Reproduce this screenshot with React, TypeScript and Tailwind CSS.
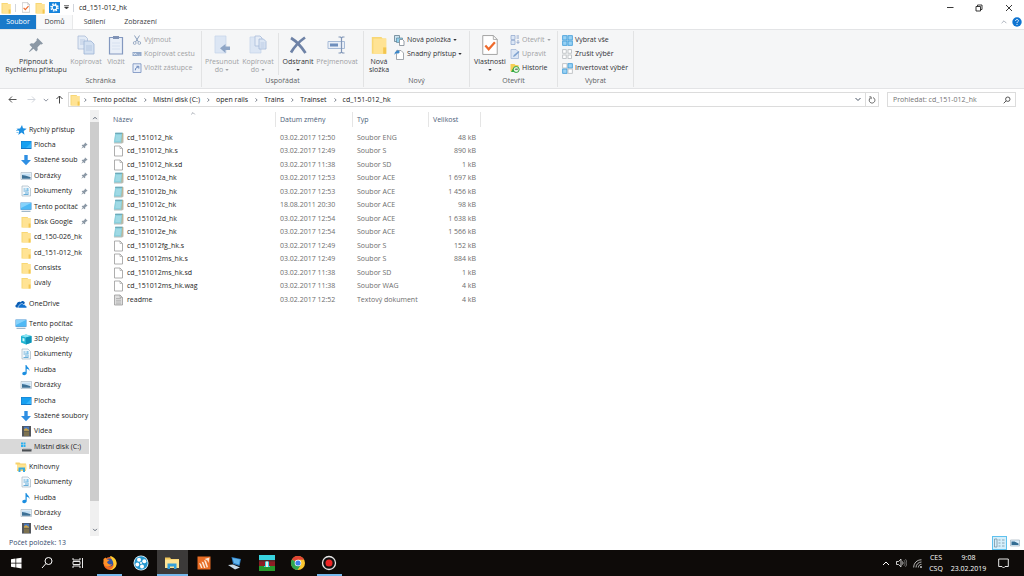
import type { ReactNode } from "react";
import clsx from "clsx";

type IconProps = { className?: string };

/* ---------- shared icons ---------- */

const Folder = ({ className = "w-2.5 h-3" }: IconProps) => (
  <svg viewBox="0 0 10 12" className={className}>
    <path d="M.5 1h6l.8 1H9.5v9.5h-9z" fill="#f8d775" />
    <path d="M1.5 2h8v9.5h-8z" fill="#ffe394" />
    <path d="M7.6 7.5h1.9v4H7.6z" fill="#f3c64f" />
  </svg>
);

const CheckDoc = ({ className = "w-2.5 h-3" }: IconProps) => (
  <svg viewBox="0 0 14 18" className={className}>
    <path d="M.5.5h9.500l3.500 3.500v13.500H.5z" fill="#fff" stroke="#9a9a9a" strokeWidth=".8" />
    <path d="M10 .5V4h3.500" fill="none" stroke="#9a9a9a" strokeWidth=".7" />
    <path d="M2.800 9.500l3 3.300 5.600-6.300" fill="none" stroke="#ee6a2c" strokeWidth="2" />
  </svg>
);

const Pin = ({ className = "w-2 h-2" }: IconProps) => (
  <svg viewBox="0 0 16 16" className={className}>
    <path
      d="M9.500 1l5.500 5.500-1.500 1-1-.2-3 3 .2 2.700-1.500 1.500L5.500 11.800 1.500 15l-.5-.5 3.200-4L1.500 7.800 3 6.300l2.700.2 3-3-.2-1z"
      fill="#8b98a5"
    />
  </svg>
);

const Monitor = ({ className = "w-3 h-3" }: IconProps) => (
  <svg viewBox="0 0 12 12" className={className}>
    <path d="M.5 1.500h11v7.300H.5z" fill="#3d8fd0" />
    <path d="M1 2h10v6.300H1z" fill="#4fb9f5" />
    <path d="M1 2h10L1 7z" fill="#86d2fb" />
    <path d="M1.500 10.300h9" stroke="#8aa7bd" />
  </svg>
);

const Desktop = () => (
  <svg viewBox="0 0 12 12" className="h-3 w-3">
    <path d="M1 2h10.500v8H1z" fill="#1577c5" />
    <path d="M1.500 2.500h9.500v6.500H1.500z" fill="#18a0f0" />
    <path d="M6 9L11 4v5z" fill="#36b5fa" />
  </svg>
);

const Download = () => (
  <svg viewBox="0 0 12 12" className="h-3 w-3">
    <path d="M4.300 1h3.400v5H11L6 11.300 1 6h3.300z" fill="#2f8fe3" />
  </svg>
);

const Picture = () => (
  <svg viewBox="0 0 12 12" className="h-3 w-3">
    <path d="M1 2.500h10.500v7H1z" fill="#f3f7fa" stroke="#9fb2c0" strokeWidth=".6" />
    <path d="M2 3.500h8.500v2.500H2z" fill="#c4e0f5" />
    <path d="M2 5l3 .6 5.500 1.400v1.700H2z" fill="#3d7196" />
  </svg>
);

const Document = () => (
  <svg viewBox="0 0 12 12" className="h-3 w-3">
    <path d="M2 1h6l2.500 2.500V11H2z" fill="#f2f8fc" stroke="#99abb9" strokeWidth=".6" />
    <path d="M3.500 4h2M3.500 6h5M5 8h4M3.500 9.500h5" stroke="#58a5d5" strokeWidth=".9" />
    <path d="M6.500 3h2v3h-2z" fill="#85c4e9" />
  </svg>
);

const Music = () => (
  <svg viewBox="0 0 12 12" className="h-3 w-3">
    <path d="M5.500 1h1c.2 2 3.300 2.700 3 6-.6-1.500-1.700-2-2.800-2.200V9c0 1.300-1.200 2.200-2.500 2.200S2.300 10.500 2.300 9.500s1.500-2 3.200-1.500z" fill="#1b8ee0" />
  </svg>
);

const Video = () => (
  <svg viewBox="0 0 12 12" className="h-3 w-3">
    <path d="M2 1h9v10.500H2z" fill="#3b3f46" />
    <path d="M4 1.500h5v4.300H4z" fill="#4b78ba" />
    <path d="M4 6.300h5V11H4z" fill="#7d7250" />
    <path d="M4 4.500l2-1.500 3 2v.8H4z" fill="#d0a441" />
    <path d="M3 1.500v10M10 1.500v10" stroke="#c8c8c8" strokeWidth=".7" strokeDasharray="1 1" />
  </svg>
);

const Cube = () => (
  <svg viewBox="0 0 12 12" className="h-3 w-3">
    <path d="M1 3l5-1.500L11.500 3v6.500L6 11.500 1 9.500z" fill="#21b5d3" />
    <path d="M1 3l5-1.500L11.500 3 6 4.500z" fill="#8be5f3" />
    <path d="M6 4.500L11.500 3v6.500L6 11.500z" fill="#0e93b9" />
    <path d="M2.500 5l2 .6v3l-2-.7z" fill="#c9f6fb" />
  </svg>
);

const Drive = () => (
  <svg viewBox="0 0 12 12" className="h-3 w-3">
    <path d="M1 1.500h2v2H1zM3.500 1.500h2v2h-2zM1 4h2v2H1zM3.500 4h2v2h-2z" fill="#2cb1f0" />
    <path d="M2 8h9.500v2.500H2z" fill="#4b4f54" />
    <path d="M3 7.500h7.500l1 1H2z" fill="#a9adb1" />
  </svg>
);

const Star = () => (
  <svg viewBox="0 0 12 12" className="h-3 w-3">
    <path d="M7 1l1 3.300 3.700.4-3 2.200.8 3.900-3-2.200-3.200 2.300.9-3.700-2.700-2.400 3.600-.4z" fill="#1d8fe1" />
    <path d="M1 6.500h3M1.500 8.500h2" stroke="#64b7ee" strokeWidth=".8" />
  </svg>
);

const Cloud = () => (
  <svg viewBox="0 0 12 12" className="h-3 w-3">
    <path d="M1.500 9.500C0 9.200 0 7 1.600 6.600 1.700 4.500 4 3 5.800 4.200 7 2 10 3 9.800 5.300L4 9.500z" fill="#0a5eb5" />
    <path d="M4.500 10c-1.700-.2-1.600-2.600.1-2.800C5 5.200 8 5 8.700 6.700c1.500-.4 1.800.6 1.800 1.100C12.300 8 12 10 11 10z" fill="#1473cf" stroke="#fff" strokeWidth=".5" />
  </svg>
);

const Libraries = () => (
  <svg viewBox="0 0 12 12" className="h-3 w-3">
    <path d="M.5 1.500h4l1 1H11V10H2V3.500H.5z" fill="#f7d169" />
    <path d="M2 3.500h9.500v5H2z" fill="#ffe391" />
    <path d="M3.500 6.500h6.500v4.500H8V8.500H5.500V11h-2z" fill="#39a9dd" />
  </svg>
);

const Notepad = () => (
  <svg viewBox="0 0 11 12" className="h-3 w-[11px]">
    <path d="M2.500 1.200h8v9.300l-1.500 1H1z" fill="#b9bdb9" />
    <path d="M2.300.8h7.400L8.700 10.500H.8z" fill="#8bd0dd" />
    <path d="M2.300.8h7.400l-.2 1.200H2z" fill="#6ea9b8" />
    <path d="M3 4h5M2.800 6h5M2.500 8h5" stroke="#c6edf3" strokeWidth=".7" />
    <path d="M9.700 1L8.700 10.500" stroke="#dba454" strokeWidth=".5" />
  </svg>
);

const BlankFile = ({ lines }: { lines?: boolean }) => (
  <svg viewBox="0 0 11 12" className="h-3 w-[11px]">
    <path d="M1.500 1h5.500l2.500 2.500v7.500h-8z" fill={lines ? "#dedede" : "#fff"} stroke="#999" strokeWidth=".8" />
    <path d="M7 1v2.500h2.500" fill="none" stroke="#999" strokeWidth=".6" />
    {lines && <path d="M3 4.500h5M3 6.300h5M3 8h5M3 9.800h5" stroke="#9b9b9b" strokeWidth=".6" />}
  </svg>
);

const Chevron = ({ d = "M1 1l3 3 3-3", className = "h-1.5 w-2 text-gray-600" }: IconProps & { d?: string }) => (
  <svg viewBox="0 0 8 5" className={className} fill="none" stroke="currentColor" strokeWidth="1">
    <path d={d} />
  </svg>
);

const Caret = () => (
  <svg viewBox="0 0 5 3" className="h-0.5 w-1 shrink-0">
    <path d="M0 0h5L2.500 3z" fill="currentColor" />
  </svg>
);

/* ---------- ribbon icons ---------- */

const CopyPages = () => (
  <svg viewBox="0 0 18 20" className="h-5 w-[18px]">
    <path d="M1 1h7l2.500 2.500V14H1z" fill="#e3ebf6" stroke="#abbdd8" strokeWidth=".8" />
    <path d="M7 6h7l3 3v10H7z" fill="#d3e0f1" stroke="#9db4d5" strokeWidth=".8" />
    <path d="M3 5h5M3 7h4M3 9h4M9 11h6M9 13h6M9 15h6" stroke="#a9bddb" strokeWidth=".7" />
  </svg>
);

const Clipboard = () => (
  <svg viewBox="0 0 18 20" className="h-5 w-[18px]">
    <path d="M2.500 2.500h13V19h-13z" fill="#e9eff8" stroke="#8398bf" strokeWidth="1.200" />
    <path d="M6 1h6v3H6z" fill="#8093b6" />
    <path d="M5 8h8M5 11h8M5 14h8" stroke="#d2deed" strokeWidth=".8" />
  </svg>
);

const Scissors = () => (
  <svg viewBox="0 0 10 10" className="h-2.5 w-2.5" fill="none" stroke="#8ba0bd">
    <path d="M2.500 .5L6.500 7M7.500 .5L3.500 7" strokeWidth="1" />
    <circle cx="2.700" cy="8" r="1.400" strokeWidth=".8" />
    <circle cx="7.300" cy="8" r="1.400" strokeWidth=".8" />
  </svg>
);

const PathIcon = () => (
  <svg viewBox="0 0 10 10" className="h-2.5 w-2.5">
    <path d="M.5 3h9v4h-9z" fill="#92a8c9" />
    <path d="M1.500 4l1 2 1-2 1 2M5.500 6h.8M7.300 6h.8" stroke="#fff" strokeWidth=".6" fill="none" />
  </svg>
);

const ShortcutIcon = () => (
  <svg viewBox="0 0 10 10" className="h-2.5 w-2.5">
    <path d="M1 .8h8v8.700H1z" fill="#e8eef8" stroke="#8199c4" strokeWidth=".9" />
    <path d="M3.300 7.300c0-2 1-3 2.500-3M4.500 3.300h2.300v2.300" stroke="#6483b8" strokeWidth="1" fill="none" />
  </svg>
);

const MoveTo = () => (
  <svg viewBox="0 0 18 20" className="h-5 w-[18px]">
    <path d="M2 1h11v17H2z" fill="#dce6f4" stroke="#c4d3e8" strokeWidth=".7" />
    <path d="M17 11.500v3.500h-4.500v3L7 13.300 12.500 9v2.500z" fill="#8fa6c6" />
  </svg>
);

const CopyTo = () => (
  <svg viewBox="0 0 18 20" className="h-5 w-[18px]">
    <path d="M1 2h11v16H1z" fill="#dce6f4" stroke="#c4d3e8" strokeWidth=".7" />
    <path d="M6 1h5l2 2v8H6z" fill="#e6edf7" stroke="#a9bddb" strokeWidth=".8" />
    <path d="M10 4h4.500L17 6.500V14h-7z" fill="#dce6f4" stroke="#a2b8d8" strokeWidth=".8" />
    <path d="M11.500 8h4M11.500 10h4M11.500 12h4" stroke="#a9bddb" strokeWidth=".6" />
  </svg>
);

const DeleteX = () => (
  <svg viewBox="0 0 18 20" className="h-5 w-[18px]">
    <path d="M2 3c5 3 10 8 14.500 15M16 2.500C11 6 5.500 11.500 2 17.500" stroke="#6e82a6" strokeWidth="2.700" fill="none" />
  </svg>
);

const Rename = () => (
  <svg viewBox="0 0 20 20" className="h-5 w-5">
    <path d="M1 6.500h16.500v7H1z" fill="#eaf0f8" stroke="#a7bbd7" />
    <path d="M3 8.500h8v3H3z" fill="#6f8fbd" />
    <path d="M11.500 2h2l1 1 1-1h2M14.500 3v14M11.500 18h2l1-1 1 1h2" stroke="#8196b7" strokeWidth="1.200" fill="none" />
  </svg>
);

const NewItem = () => (
  <svg viewBox="0 0 11 11" className="h-[11px] w-[11px]">
    <path d="M.5.5h5v6h-5z" fill="#cbe3f1" stroke="#66808f" strokeWidth=".8" />
    <path d="M2.500 3h6v4.500h-6z" fill="#8ed0ec" stroke="#57798c" strokeWidth=".6" />
    <path d="M5.500 4.500h3L10 6v4.500H5.500z" fill="#fff" stroke="#7b8790" strokeWidth=".8" />
  </svg>
);

const EasyAccess = () => (
  <svg viewBox="0 0 11 11" className="h-[11px] w-[11px]">
    <path d="M2.500 1.500H7L9.500 4v6.500h-7z" fill="#fff" stroke="#8b9299" strokeWidth=".8" />
    <path d="M.5 6c0-3 1-4 3-4V.5L6 3 3.500 5.300V4C2 4 1.500 4.500.5 6z" fill="#3886c9" />
  </svg>
);

const OpenIcon = () => (
  <svg viewBox="0 0 10 10" className="h-2.5 w-2.5">
    <path d="M1 .5h4v4H1zM1 5.500h4v4H1z" fill="#dce7f5" stroke="#96acd0" strokeWidth=".8" />
    <path d="M6.500 1h2.500M6.500 3h2.500M8 5v3M6.500 6.800L8 8.500l1.500-1.700" stroke="#91a7cc" fill="none" />
  </svg>
);

const EditIcon = () => (
  <svg viewBox="0 0 10 10" className="h-2.5 w-2.5">
    <path d="M1 .5h5L8.500 3v6.500H1z" fill="#dce7f5" stroke="#a5b9d8" strokeWidth=".8" />
    <path d="M3 8l.8-2L8.500 2l1 1L5 7.300z" fill="#7ea2d0" />
  </svg>
);

const HistoryIcon = () => (
  <svg viewBox="0 0 10 10" className="h-2.5 w-2.5">
    <path d="M.5 1h4l1 1h3v6.500h-8z" fill="#f5cf57" />
    <circle cx="6.200" cy="6.500" r="3" fill="#e3f3df" stroke="#35a845" />
    <path d="M4.800 7h3V5.500H5.500z" fill="#6d8a78" />
    <path d="M1 9l2-3.500 1.500 3.500z" fill="#35a845" />
  </svg>
);

const SelectGrid = ({ kind }: { kind: "all" | "none" | "invert" }) => {
  const cells = [[0.7, 0.7], [6, 0.7], [0.7, 6], [6, 6]];
  return (
    <svg viewBox="0 0 11 11" className="h-[11px] w-[11px]">
      {cells.map(([x, y], i) => {
        const on = kind === "all" || (kind === "invert" && (i === 1 || i === 2));
        const size = kind === "none" ? 3.5 : 4.3;
        return (
          <rect
            key={i}
            x={x}
            y={y}
            width={size}
            height={size}
            fill={on ? "#9bd2f4" : "#fff"}
            stroke={on ? "#3698d8" : "#b5b9bd"}
            strokeWidth=".8"
          />
        );
      })}
    </svg>
  );
};

/* ---------- ribbon ---------- */

type BigButtonProps = {
  icon: ReactNode;
  lines: string[];
  width: string;
  disabled?: boolean;
  caret?: "inline" | "below";
};

const BigButton = ({ icon, lines, width, disabled, caret }: BigButtonProps) => (
  <button
    disabled={disabled}
    className={clsx(
      "flex shrink-0 flex-col items-center leading-2 whitespace-nowrap",
      width,
      disabled ? "text-[#a0a1a4]" : "text-[#2f3034]"
    )}
  >
    <span className="flex h-[25px] items-center pb-px">{icon}</span>
    {lines.map((line, i) => (
      <span key={line} className="flex items-center gap-0.5">
        {line}
        {caret === "inline" && i === lines.length - 1 && <Caret />}
      </span>
    ))}
    {caret === "below" && (
      <span className="flex h-2 items-center">
        <Caret />
      </span>
    )}
  </button>
);

type SmallButtonProps = { icon: ReactNode; label: string; disabled?: boolean; caret?: boolean };

const SmallButton = ({ icon, label, disabled, caret }: SmallButtonProps) => (
  <button
    disabled={disabled}
    className={clsx(
      "flex h-3.5 items-center gap-0.5 whitespace-nowrap",
      disabled ? "text-[#a0a1a4]" : "text-[#2f3034]"
    )}
  >
    {icon}
    {label}
    {caret && <Caret />}
  </button>
);

const RibbonGroup = ({ label, width, children }: { label: string; width: string; children: ReactNode }) => (
  <section className={clsx("flex shrink-0 flex-col border-r border-[#e2e3e4]", width)}>
    <div className="flex h-[46px] items-start pt-0.5">{children}</div>
    <h2 className="text-center leading-3 text-[#5c5f64]">{label}</h2>
  </section>
);

const Ribbon = () => (
  <div className="flex h-[60px] shrink-0 border-y border-[#e3e4e6] bg-[#f5f6f7] py-px">
    <RibbonGroup label="Schránka" width="w-[202px]">
      <BigButton icon={<Pin className="h-4 w-4" />} lines={["Připnout k", "Rychlému přístupu"]} width="w-[72px]" />
      <BigButton icon={<CopyPages />} lines={["Kopírovat"]} width="w-7" disabled />
      <BigButton icon={<Clipboard />} lines={["Vložit"]} width="w-8" disabled />
      <div>
        <SmallButton icon={<Scissors />} label="Vyjmout" disabled />
        <SmallButton icon={<PathIcon />} label="Kopírovat cestu" disabled />
        <SmallButton icon={<ShortcutIcon />} label="Vložit zástupce" disabled />
      </div>
    </RibbonGroup>
    <RibbonGroup label="Uspořádat" width="w-[162px]">
      <BigButton icon={<MoveTo />} lines={["Přesunout", "do"]} width="w-10" disabled caret="inline" />
      <BigButton icon={<CopyTo />} lines={["Kopírovat", "do"]} width="w-8" disabled caret="inline" />
      <div className="ml-1 self-stretch border-r border-[#e2e3e4]" />
      <BigButton icon={<DeleteX />} lines={["Odstranit"]} width="w-[38px]" caret="below" />
      <BigButton icon={<Rename />} lines={["Přejmenovat"]} width="w-10" disabled />
    </RibbonGroup>
    <RibbonGroup label="Nový" width="w-[106px]">
      <BigButton icon={<Folder className="h-5 w-4" />} lines={["Nová", "složka"]} width="w-[30px]" />
      <div>
        <SmallButton icon={<NewItem />} label="Nová položka" caret />
        <SmallButton icon={<EasyAccess />} label="Snadný přístup" caret />
      </div>
    </RibbonGroup>
    <RibbonGroup label="Otevřít" width="w-[88px]">
      <BigButton icon={<CheckDoc className="h-5 w-4" />} lines={["Vlastnosti"]} width="w-10" caret="below" />
      <div>
        <SmallButton icon={<OpenIcon />} label="Otevřít" disabled caret />
        <SmallButton icon={<EditIcon />} label="Upravit" disabled />
        <SmallButton icon={<HistoryIcon />} label="Historie" />
      </div>
    </RibbonGroup>
    <RibbonGroup label="Vybrat" width="w-[76px]">
      <div className="pl-1">
        <SmallButton icon={<SelectGrid kind="all" />} label="Vybrat vše" />
        <SmallButton icon={<SelectGrid kind="none" />} label="Zrušit výběr" />
        <SmallButton icon={<SelectGrid kind="invert" />} label="Invertovat výběr" />
      </div>
    </RibbonGroup>
  </div>
);

/* ---------- title bar and tabs ---------- */

const TitleBar = () => (
  <header className="flex h-[15px] shrink-0 items-center">
    <Folder className="ml-px h-3 w-2.5" />
    <span className="ml-1 h-2 border-l border-gray-300" />
    <button aria-label="Vlastnosti" className="ml-1.5">
      <CheckDoc className="h-[11px] w-2" />
    </button>
    <button aria-label="Nová složka" className="ml-[5px]">
      <Folder />
    </button>
    <button aria-label="Nastavení" className="ml-1">
      <svg viewBox="0 0 11 11" className="h-[11px] w-[11px]">
        <path d="M0 0h11v11H0z" fill="#1583dc" />
        <circle cx="5.500" cy="5.500" r="3.500" fill="none" stroke="#fff" strokeWidth="1.500" strokeDasharray="1.500 1.250" />
        <circle cx="5.500" cy="5.500" r="2.300" fill="none" stroke="#fff" strokeWidth="1.200" />
      </svg>
    </button>
    <button aria-label="Přizpůsobit panel" className="ml-1">
      <svg viewBox="0 0 5 5" className="h-[5px] w-[5px]">
        <path d="M0 .5h5M.5 2h4L2.500 4z" stroke="#333" strokeWidth=".6" fill="#333" />
      </svg>
    </button>
    <span className="ml-1 h-2 border-l border-gray-300" />
    <h1 className="ml-[5px] text-[#222]">cd_151-012_hk</h1>
    <div className="ml-auto flex items-center text-[#222]">
      <button aria-label="Minimalizovat" className="flex w-[29px] justify-center">
        <svg viewBox="0 0 8 8" className="h-2 w-2">
          <path d="M1 3.500h6.500" stroke="currentColor" strokeWidth=".9" />
        </svg>
      </button>
      <button aria-label="Obnovit" className="flex w-[29px] justify-center">
        <svg viewBox="0 0 8 8" className="h-2 w-2" fill="none" stroke="currentColor" strokeWidth=".9">
          <path d="M1 2.500h4.500V7H1zM2.500 2.500V1H7v4.500H5.500" />
        </svg>
      </button>
      <button aria-label="Zavřít" className="flex w-[31px] justify-center">
        <svg viewBox="0 0 8 8" className="h-2 w-2" stroke="currentColor" strokeWidth=".9">
          <path d="M1 1l6 6M7 1L1 7" />
        </svg>
      </button>
    </div>
  </header>
);

const Tabs = () => (
  <nav className="flex h-3.5 shrink-0 items-stretch text-[#3b3c3f]">
    <button className="w-9 bg-[#1979ca] text-white">Soubor</button>
    <button className="w-[37px] border-x border-[#e8e9ea] bg-[#f8f9fa]">Domů</button>
    <button className="w-[43px]">Sdílení</button>
    <button className="w-[49px]">Zobrazení</button>
    <button aria-label="Sbalit pás karet" className="ml-auto">
      <Chevron d="M1 4l3-3 3 3" className="h-1 w-2 text-gray-400" />
    </button>
    <button aria-label="Nápověda" className="mr-0.5 ml-1 flex items-center">
      <svg viewBox="0 0 10 10" className="h-2.5 w-2.5">
        <circle cx="5" cy="5" r="4.700" fill="#0f74d1" />
        <path d="M3.600 3.900c0-2 2.900-1.800 2.800-.1C6.400 4.800 5 4.800 5 6.100M5 7v1" stroke="#fff" strokeWidth=".9" fill="none" />
      </svg>
    </button>
  </nav>
);

/* ---------- address bar ---------- */

const crumbs = ["Tento počítač", "Místní disk (C:)", "open rails", "Trains", "Trainset", "cd_151-012_hk"];

const Arrow = ({ d, className }: { d: string; className: string }) => (
  <svg viewBox="0 0 9 9" className={clsx("h-[9px] w-[9px]", className)} fill="none" stroke="currentColor">
    <path d={d} />
  </svg>
);

const AddressBar = () => (
  <div className="flex h-[21px] shrink-0 items-center pr-2 text-[#222]">
    <button aria-label="Zpět" className="ml-2">
      <Arrow d="M8.500 4.500H1M4 1.500l-3 3 3 3" className="text-[#555]" />
    </button>
    <button aria-label="Vpřed" className="ml-2.5">
      <Arrow d="M.5 4.500H8M5 1.500l3 3-3 3" className="text-gray-300" />
    </button>
    <button aria-label="Poslední umístění" className="ml-[7px]">
      <Chevron className="h-1 w-1.5 text-gray-500" />
    </button>
    <button aria-label="Nahoru" className="ml-1.5">
      <Arrow d="M4.500 8.500V1M1.500 4l3-3 3 3" className="text-[#444]" />
    </button>
    <div className="ml-1 flex h-[15px] flex-1 items-center border border-[#dcdcdc] pl-px">
      <Folder />
      {crumbs.map((crumb) => (
        <span key={crumb} className="flex items-center">
          <svg viewBox="0 0 4 6" className="ml-1 h-1 w-[3px] text-gray-700" fill="none" stroke="currentColor">
            <path d="M.5.5L3 3 .5 5.500" />
          </svg>
          <a href="#" className="ml-1.5 pr-[3px]">
            {crumb}
          </a>
        </span>
      ))}
      <button aria-label="Předchozí umístění" className="ml-auto px-[3px]">
        <Chevron d="M1.500 1L4 3.500 6.500 1" className="h-[5px] w-2 text-gray-600" />
      </button>
      <button aria-label="Obnovit složku" className="flex h-full w-[13px] items-center justify-center border-l border-[#dcdcdc]">
        <svg viewBox="0 0 9 9" className="h-2 w-2" fill="none" stroke="#555" strokeWidth="1">
          <path d="M5.800 1.800A3.200 3.200 0 1 1 2.500 2.300M1.500 1h2v2.500" />
        </svg>
      </button>
    </div>
    <div className="ml-2 flex h-[15px] w-[129px] items-center border border-[#dcdcdc] pr-1 pl-[5px]">
      <input
        aria-label="Prohledat složku"
        placeholder="Prohledat: cd_151-012_hk"
        className="min-w-0 flex-1 outline-none placeholder:text-[#737373]"
      />
      <svg viewBox="0 0 8 8" className="h-2 w-2" fill="none" stroke="#555">
        <circle cx="4.800" cy="3.200" r="2.200" />
        <path d="M3.200 4.800L.7 7.300" />
      </svg>
    </div>
  </div>
);

/* ---------- navigation pane ---------- */

type NavItem = { label: string; icon: ReactNode; pinned?: boolean; selected?: boolean };

const quickAccess: NavItem[] = [
  { label: "Plocha", icon: <Desktop />, pinned: true },
  { label: "Stažené soub", icon: <Download />, pinned: true },
  { label: "Obrázky", icon: <Picture />, pinned: true },
  { label: "Dokumenty", icon: <Document />, pinned: true },
  { label: "Tento počítač", icon: <Monitor />, pinned: true },
  { label: "Disk Google", icon: <Folder className="mx-px h-3 w-2.5" />, pinned: true },
  { label: "cd_150-026_hk", icon: <Folder className="mx-px h-3 w-2.5" /> },
  { label: "cd_151-012_hk", icon: <Folder className="mx-px h-3 w-2.5" /> },
  { label: "Consists", icon: <Folder className="mx-px h-3 w-2.5" /> },
  { label: "úvaly", icon: <Folder className="mx-px h-3 w-2.5" /> },
];

const thisPc: NavItem[] = [
  { label: "3D objekty", icon: <Cube /> },
  { label: "Dokumenty", icon: <Document /> },
  { label: "Hudba", icon: <Music /> },
  { label: "Obrázky", icon: <Picture /> },
  { label: "Plocha", icon: <Desktop /> },
  { label: "Stažené soubory", icon: <Download /> },
  { label: "Videa", icon: <Video /> },
  { label: "Místní disk (C:)", icon: <Drive />, selected: true },
];

const libraries: NavItem[] = [
  { label: "Dokumenty", icon: <Document /> },
  { label: "Hudba", icon: <Music /> },
  { label: "Obrázky", icon: <Picture /> },
  { label: "Videa", icon: <Video /> },
];

type NavGroupProps = { label: string; icon: ReactNode; items?: NavItem[]; height: string };

const NavGroup = ({ label, icon, items = [], height }: NavGroupProps) => (
  <ul className={clsx("grid auto-rows-fr", height)}>
    <li className="flex items-center gap-0.5 pl-[15px]">
      {icon}
      <a href="#">{label}</a>
    </li>
    {items.map((item) => (
      <li
        key={item.label}
        className={clsx("flex min-w-0 items-center gap-0.5 pl-5", item.selected && "bg-[#d9d9d9]")}
      >
        <span className="shrink-0">{item.icon}</span>
        <a href="#" className={clsx("whitespace-nowrap", item.pinned && "w-[45px]")}>
          {item.label}
        </a>
        {item.pinned && <Pin className="h-[7px] w-[7px] shrink-0" />}
      </li>
    ))}
  </ul>
);

const NavPane = () => (
  <aside className="flex w-[99px] shrink-0 overflow-hidden">
    <div className="flex w-[89px] flex-col gap-[5px] pt-3 text-[#1c1c1c]">
      <NavGroup label="Rychlý přístup" icon={<Star />} items={quickAccess} height="h-[170px]" />
      <NavGroup label="OneDrive" icon={<Cloud />} height="h-[15px]" />
      <NavGroup label="Tento počítač" icon={<Monitor />} items={thisPc} height="h-[139px]" />
      <NavGroup label="Knihovny" icon={<Libraries />} items={libraries} height="h-[77px]" />
    </div>
    <div className="ml-px flex w-[9px] flex-col items-center bg-[#f0f0f0] text-gray-700">
      <button aria-label="Posunout nahoru" className="flex h-3 w-full items-end justify-center pb-0.5">
        <Chevron d="M1.500 4L4 1.500 6.500 4" className="h-1 w-1.5" />
      </button>
      <div className="w-full flex-1 bg-[#cdcdcd]" />
      <button aria-label="Posunout dolů" className="flex h-[35px] w-full items-end justify-center pb-1">
        <Chevron d="M1.500 1L4 3.500 6.500 1" className="h-1 w-1.5" />
      </button>
    </div>
  </aside>
);

/* ---------- file list ---------- */

type FileRow = [name: string, date: string, type: string, size: string, icon: "note" | "blank" | "text"];

const files: FileRow[] = [
  ["cd_151012_hk", "03.02.2017 12:50", "Soubor ENG", "48 kB", "note"],
  ["cd_151012_hk.s", "03.02.2017 12:49", "Soubor S", "890 kB", "blank"],
  ["cd_151012_hk.sd", "03.02.2017 11:38", "Soubor SD", "1 kB", "blank"],
  ["cd_151012a_hk", "03.02.2017 12:53", "Soubor ACE", "1 697 kB", "note"],
  ["cd_151012b_hk", "03.02.2017 12:53", "Soubor ACE", "1 456 kB", "note"],
  ["cd_151012c_hk", "18.08.2011 20:30", "Soubor ACE", "98 kB", "note"],
  ["cd_151012d_hk", "03.02.2017 12:54", "Soubor ACE", "1 638 kB", "note"],
  ["cd_151012e_hk", "03.02.2017 12:54", "Soubor ACE", "1 566 kB", "note"],
  ["cd_151012fg_hk.s", "03.02.2017 12:49", "Soubor S", "152 kB", "blank"],
  ["cd_151012ms_hk.s", "03.02.2017 12:49", "Soubor S", "884 kB", "blank"],
  ["cd_151012ms_hk.sd", "03.02.2017 11:38", "Soubor SD", "1 kB", "blank"],
  ["cd_151012ms_hk.wag", "03.02.2017 11:38", "Soubor WAG", "4 kB", "blank"],
  ["readme", "03.02.2017 12:52", "Textový dokument", "4 kB", "text"],
];

const columns = [
  { label: "Název", width: "w-[163px]" },
  { label: "Datum změny", width: "w-[77px]" },
  { label: "Typ", width: "w-[76px]" },
  { label: "Velikost", width: "w-[52px]" },
];

const FileList = () => (
  <main className="flex-1 pt-0.5 pl-3.5">
    <table className="table-fixed border-collapse text-[#6d6d6d]">
      <thead>
        <tr>
          {columns.map((col, i) => (
            <th key={col.label} scope="col" className={clsx("p-0 pb-1 text-left align-top font-normal", col.width)}>
              <div className={clsx("flex h-[15px] items-center border-r border-[#e5e5e5] text-[#4c607a]", i > 0 && "pl-1")}>
                {col.label}
                {i === 0 && (
                  <Chevron d="M1 4l3-3 3 3" className="mb-auto ml-[57px] h-[3px] w-1.5 text-gray-500" />
                )}
              </div>
            </th>
          ))}
        </tr>
      </thead>
      <tbody>
        {files.map(([name, date, type, size, icon]) => (
          <tr key={name} className="h-[13px] leading-3 even:h-3.5">
            <td className="p-0">
              <a href="#" className="flex items-center gap-[3px] text-[#1c1c1c]">
                {icon === "note" ? <Notepad /> : <BlankFile lines={icon === "text"} />}
                {name}
              </a>
            </td>
            <td className="p-0 pl-1">{date}</td>
            <td className="p-0 pl-1 whitespace-nowrap">{type}</td>
            <td className="p-0 pr-[5px] text-right">{size}</td>
          </tr>
        ))}
      </tbody>
    </table>
  </main>
);

const StatusBar = () => (
  <footer className="flex h-3.5 shrink-0 items-center pr-1 pl-[9px] text-[#33496d]">
    Počet položek: 13
    <button aria-label="Podrobnosti" className="ml-auto border border-[#5fc1ee] bg-[#d5effb] p-px">
      <svg viewBox="0 0 11 10" className="h-2.5 w-[11px]" stroke="#7894a4" strokeWidth=".8" fill="none">
        <path d="M.5 1h2.500v8H.500zM4.500 2h2M4.500 5h2M4.500 8h2M8 2h2.500M8 5h2.500M8 8h2.500" />
      </svg>
    </button>
    <button aria-label="Velké ikony" className="ml-[3px]">
      <svg viewBox="0 0 10 8" className="h-2 w-2.5">
        <path d="M.5 1h9v6h-9z" fill="#dceefa" stroke="#a5b3be" strokeWidth=".7" />
        <path d="M1.500 2.500h3l4 2V6h-7z" fill="#356d93" />
      </svg>
    </button>
  </footer>
);

/* ---------- taskbar ---------- */

type TaskApp = { name: string; icon: ReactNode; running?: boolean; active?: boolean };

const apps: TaskApp[] = [
  {
    name: "Start",
    icon: <path d="M3 4.300l4.500-.7v4.100H3zM8.200 3.500l5.300-.8v5H8.200zM3 8.400h4.500v4.100L3 11.800zM8.200 8.400h5.300v5l-5.300-.8z" fill="#fff" />,
  },
  {
    name: "Hledat",
    icon: (
      <g fill="none" stroke="#fff" strokeWidth="1">
        <circle cx="9.500" cy="6" r="3.500" />
        <path d="M7 8.500L3 13" />
      </g>
    ),
  },
  {
    name: "Zobrazení úloh",
    icon: <path d="M3 3v2h7V3M3 13v-2h7v2M3 6.500h7v3H3zM12.500 3v10M12.500 7v2" fill="none" stroke="#e8e8e8" />,
  },
  {
    name: "Firefox",
    running: true,
    icon: (
      <>
        <circle cx="8" cy="8.500" r="6.500" fill="#f36a22" />
        <circle cx="7.500" cy="7.500" r="4" fill="#3155a8" />
        <path d="M8 1c4 .5 7 4 6.500 8C14 13.500 10 15.500 7 15c3-.5 5-3 4.500-6C11 5 9 4 8 1z" fill="#ffcb32" />
        <path d="M1.500 4l2-1.500 1.500 2 2.500.5-2.500 2c.5 2 3 3 5 2-1 3-7 3.500-8.500-.5z" fill="#ff9128" />
      </>
    ),
  },
  {
    name: "Media",
    icon: (
      <>
        <circle cx="8" cy="8" r="7.500" fill="#e7f6fd" />
        <circle cx="8" cy="8" r="6.700" fill="#2698cf" />
        <circle cx="6" cy="4.800" r="2" fill="#fff" />
        <circle cx="11.300" cy="6.300" r="2" fill="#fff" />
        <circle cx="4.300" cy="9.500" r="1.900" fill="#fff" />
        <circle cx="9" cy="11.500" r="2" fill="#fff" />
        <circle cx="8" cy="8" r="1" fill="#fff" />
      </>
    ),
  },
  {
    name: "Průzkumník souborů",
    running: true,
    active: true,
    icon: (
      <>
        <path d="M1 2.500h5l1 1.500h8V13H1z" fill="#f2c75b" />
        <path d="M1 4.500h14V13H1z" fill="#ffe395" />
        <path d="M3.500 8.500h9V14h-2.500v-2.500H6V14H3.500z" fill="#359fda" />
      </>
    ),
  },
  {
    name: "Train Simulator",
    icon: (
      <>
        <path d="M1.500 1.500h13v13h-13z" fill="#e86c24" />
        <path d="M3 8l2 .8 1.500 4.200H5zM5.500 6.500l2 .8L9.500 13H8zM8 5l2 .8L12 12l-1.300.8zM8.500 4l5-1.500-1 5.500-1-2.500z" fill="#fbe6d5" />
      </>
    ),
  },
  {
    name: "Vzdálená plocha",
    icon: (
      <>
        <path d="M4.500 2l9.500 2-1.500 7L6 9z" fill="#2c7bc0" />
        <path d="M5.500 3l7.500 1.600-1 5L7 8z" fill="#62b5ec" />
        <path d="M1 10l5-.5 7 3-5 2z" fill="#c9dae7" />
      </>
    ),
  },
  {
    name: "MaSzyna",
    icon: (
      <>
        <path d="M0 0h16v16H0z" fill="#38d3df" />
        <path d="M0 5h6v6H0zM10 5h6v6h-6z" fill="#8d1d24" />
        <path d="M0 5h16v1.500H0z" fill="#542626" />
        <path d="M7 6.500h2V12H7z" fill="#eee" />
        <path d="M0 11h5v1h6v-1h5v5H0z" fill="#27992d" />
      </>
    ),
  },
  {
    name: "Chrome",
    icon: (
      <>
        <circle cx="8" cy="8" r="7" fill="#fbc62f" />
        <path d="M8 8L1.900 4.500A7 7 0 0 1 14.100 4.700H8z" fill="#e24435" />
        <path d="M1.900 4.500A7 7 0 0 0 7.500 15l3.400-5.300L8 8z" fill="#2fa651" />
        <circle cx="8" cy="8" r="3.300" fill="#fff" />
        <circle cx="8" cy="8" r="2.600" fill="#3f82ec" />
      </>
    ),
  },
  {
    name: "Nahrávání",
    running: true,
    icon: (
      <>
        <circle cx="8" cy="8" r="6.500" fill="#111" stroke="#e9e9e9" strokeWidth="1.300" />
        <circle cx="8" cy="8" r="3.500" fill="#ed2424" />
      </>
    ),
  },
];

const Taskbar = () => (
  <nav className="flex h-[26px] shrink-0 items-stretch bg-[#0e0b09] text-white">
    <div className="grid w-[345px] grid-cols-11">
      {apps.map((app) => (
        <button
          key={app.name}
          aria-label={app.name}
          className={clsx("flex flex-col items-center", app.active && "bg-[#3c3a39]")}
        >
          <span className="flex flex-1 items-center pt-0.5">
            <svg viewBox="0 0 16 16" className="h-4 w-4">
              {app.icon}
            </svg>
          </span>
          <span
            className={clsx("h-0.5", app.active ? "w-full" : "w-[25px]", app.running && "bg-[#76b9ed]")}
          />
        </button>
      ))}
    </div>
    <div className="ml-auto flex items-center">
      <button aria-label="Skryté ikony">
        <Chevron d="M1 4l3-3 3 3" className="h-[5px] w-2" />
      </button>
      <button aria-label="Hlasitost" className="ml-1.5">
        <svg viewBox="0 0 11 10" className="h-2.5 w-[11px]" fill="none" stroke="#fff" strokeWidth=".8">
          <path d="M.5 3.500h2L5 1.200v7.600L2.500 6.500h-2z" />
          <path d="M6.500 3.500c.6 1 .6 2 0 3" />
          <path d="M8 2.200c1.400 1.800 1.400 3.800 0 5.600M9.500 1.200c1.800 2.300 1.800 5.300 0 7.600" stroke="#888" />
        </svg>
      </button>
      <button aria-label="Síť" className="ml-1.5">
        <svg viewBox="0 0 9 9" className="h-[9px] w-[9px]" fill="none" stroke="#ccc" strokeWidth=".9">
          <path d="M.7 8.500C.7 4 4 .8 8.500.8M3 8.500C3 5.500 5.500 3 8.500 3M5.300 8.500c0-1.800 1.400-3.200 3.200-3.200" />
          <circle cx="8" cy="8" r=".6" fill="#fff" />
        </svg>
      </button>
      <button className="ml-1.5 w-4 text-center leading-[11px]">
        CES
        <br />
        CSQ
      </button>
      <button className="ml-[5px] w-[39px] text-center leading-[11px]">
        9:08
        <br />
        23.02.2019
      </button>
      <button aria-label="Oznámení" className="mr-[15px] ml-2.5">
        <svg viewBox="0 0 11 11" className="h-[11px] w-[11px]" fill="none" stroke="#fff" strokeWidth=".9">
          <path d="M.7 1h9.600v7.500H7L5.500 10 4 8.500H.700z" />
        </svg>
      </button>
    </div>
  </nav>
);

export default function App() {
  return (
    <div className="flex h-screen flex-col overflow-hidden bg-white font-['Open_Sans','Noto_Sans',sans-serif] text-[7px] leading-[10px]">
      <TitleBar />
      <Tabs />
      <Ribbon />
      <AddressBar />
      <div className="flex min-h-0 flex-1">
        <NavPane />
        <FileList />
      </div>
      <StatusBar />
      <Taskbar />
    </div>
  );
}
